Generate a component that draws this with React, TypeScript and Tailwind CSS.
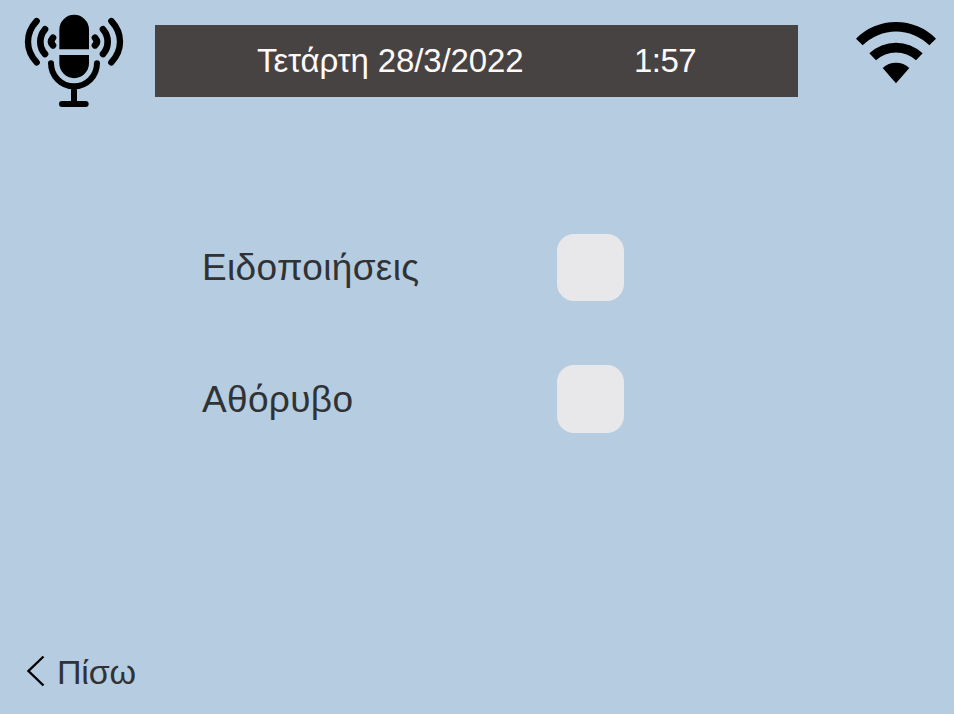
import React from "react";

function MicIcon() {
  return (
    <svg className="mt-1 h-[110px] w-[120px] shrink-0" viewBox="0 0 360 330" fill="none" stroke="#000" strokeWidth="18" strokeLinecap="round">
      <path d="M136 136V77a44.5 44.5 0 0 1 89 0v59zM136 153h89v25a44.5 44.5 0 0 1-89 0z" fill="#000" stroke="none" />
      <path d="M111 178a69 69 0 0 0 138 0M180 248v50M144 300h71" />
      <path d="M292 51Q318 79 318 113T292 175M68 51Q42 79 42 113T68 175" strokeWidth="19" />
      <path d="M267 76Q281 92 281 113T267 150M93 76Q79 92 79 113T93 150" strokeWidth="20" />
      <path d="M243 101Q254 113 243 124M117 101Q106 113 117 124" strokeWidth="20" />
    </svg>
  );
}

function WifiIcon() {
  return (
    <svg className="mt-2.5 h-[84px] w-[104px] shrink-0" viewBox="0 0 312 252" fill="#000">
      <path d="M30 86A169 169 0 0 1 270 86L250 106A142 142 0 0 0 50 106z" />
      <path d="M70 130A116 116 0 0 1 230 130L210 151A88 88 0 0 0 90 151z" />
      <path d="M110 174A58 58 0 0 1 190 174L150 220z" />
    </svg>
  );
}

function Setting({ label, boxHeight }: { label: string; boxHeight: string }) {
  const [on, setOn] = React.useState(false);
  return (
    <div className="flex h-[67px] items-end">
      <span className="w-[355px] text-[37px] leading-[67px] tracking-[0.34px]">{label}</span>
      <button
        type="button"
        role="checkbox"
        aria-checked={on}
        aria-label={label}
        onClick={() => setOn(!on)}
        className={`w-[67px] rounded-[17px] bg-[#e8e8ea] ${boxHeight}`}
      />
    </div>
  );
}

export default function App() {
  return (
    <div className="flex h-[714px] w-[954px] flex-col overflow-hidden bg-[#b5cce1] font-['Liberation_Sans',Arial,sans-serif] text-[#303234]">
      <header className="flex h-[114px] items-start pl-3.5">
        <MicIcon />
        <div className="mt-[25px] ml-[21px] flex h-[72px] w-[643px] shrink-0 items-center bg-[#474342] pb-0.5 pl-[102px] text-[33px] leading-none tracking-[-0.12px] text-[#fffafa]">
          <span className="w-[377px] whitespace-nowrap">Τετάρτη 28/3/2022</span>
          <span className="tracking-[-0.5px]">1:57</span>
        </div>
        <div className="w-12 shrink-0" />
        <WifiIcon />
      </header>
      <main className="flex flex-1 flex-col gap-[65px] pt-[120px] pl-[202px]">
        <Setting label="Ειδοποιήσεις" boxHeight="h-[67px]" />
        <Setting label="Αθόρυβο" boxHeight="h-[68px]" />
      </main>
      <footer className="flex h-[74px] items-start pl-[26px]">
        <svg className="mt-[15px] h-8 w-5" viewBox="0 0 20 32" fill="none" stroke="#000" strokeWidth="2.4">
          <path d="M17.5 1.5L2.5 16L17.5 30.5" />
        </svg>
        <a href="#" className="mt-[15px] ml-[11px] text-[34px] leading-none tracking-[-0.2px]">Πίσω</a>
      </footer>
    </div>
  );
}
